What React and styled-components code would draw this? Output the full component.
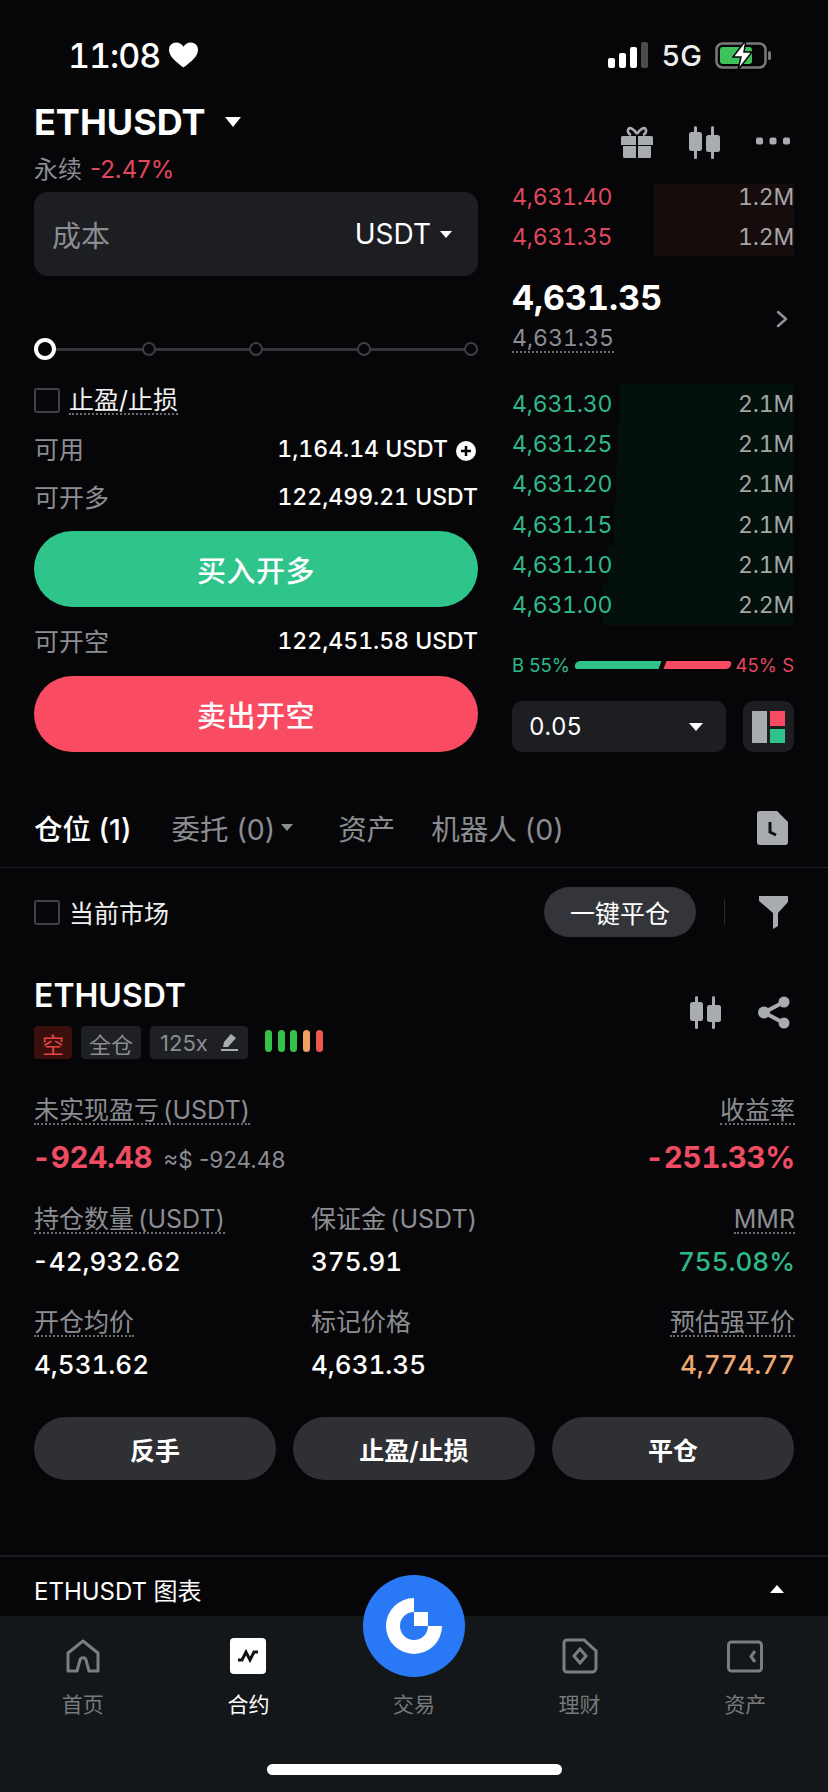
import React from "react";
import styled, { createGlobalStyle } from "styled-components";

const Global = createGlobalStyle`
  html, body { margin: 0; padding: 0; background: #060608; }
  * { box-sizing: border-box; }
`;

const FONT = `Inter, "Noto Sans CJK SC", "Noto Sans", sans-serif`;
const GREY = "#8b8d91";
const RED = "#ee4c62";
const GREEN = "#2fb98a";

const Screen = styled.div`
  position: relative;
  width: 828px;
  height: 1792px;
  overflow: hidden;
  display: flex;
  flex-direction: column;
  background: #060608;
  color: #fff;
  font-family: ${FONT};
  font-variant-numeric: tabular-nums;
`;

const StatusBar = styled.div`
  height: 100px;
  padding: 35px 56px 0 68px;
  display: flex;
  justify-content: space-between;
  align-items: flex-start;
`;
const StatusGroup = styled.div`
  display: flex;
  align-items: center;
  height: 40px;
  gap: ${(p) => p.$gap || 12}px;
`;
const Clock = styled.span`
  font-size: 34px;
  font-weight: 500;
  letter-spacing: -1px;
`;
const Network = styled.span`
  font-size: 29px;
  font-weight: 500;
  color: #eee;
`;

const TradeGrid = styled.section`
  display: grid;
  grid-template-columns: 444px 282px;
  column-gap: 34px;
  padding: 0 34px;
`;
const Column = styled.div`
  display: flex;
  flex-direction: column;
  min-width: 0;
`;
const TitleRow = styled.div`
  height: 44px;
  display: flex;
  align-items: center;
  gap: 19px;
`;
const Title = styled.h1`
  margin: 0;
  font-size: 36px;
  font-weight: 700;
  letter-spacing: 0;
`;
const Caret = styled.span`
  display: block;
  width: 0;
  height: 0;
  border-left: ${(p) => p.$size || 7}px solid transparent;
  border-right: ${(p) => p.$size || 7}px solid transparent;
  ${(p) => (p.$up ? "border-bottom" : "border-top")}: ${(p) => (p.$size || 7) * 1.25}px solid ${(p) => p.$color || "#fff"};
`;
const SubTitle = styled.div`
  margin-top: 11px;
  height: 30px;
  line-height: 30px;
  font-size: 24px;
  color: ${GREY};
  display: flex;
  gap: 8px;
`;
const Down = styled.span`
  color: #e0475f;
  font-variant-numeric: normal;
`;
const InputBox = styled.div`
  margin-top: 7px;
  height: 84px;
  border-radius: 14px;
  background: #1c1e22;
  padding: 0 26px 0 18px;
  display: flex;
  align-items: center;
  justify-content: space-between;
`;
const Placeholder = styled.span`
  font-size: 29px;
  color: #8a8c90;
`;
const UnitPick = styled.span`
  display: flex;
  align-items: center;
  gap: 9px;
  font-size: 28px;
`;

const Slider = styled.div`
  margin-top: 61px;
  height: 24px;
  display: flex;
  align-items: center;
  justify-content: space-between;
  background: linear-gradient(#333539, #333539) center / 100% 3px no-repeat;
`;
const Knob = styled.span`
  width: 22px;
  height: 22px;
  margin-right: -8px;
  border-radius: 50%;
  border: 4px solid #fff;
  background: #060608;
`;
const Stop = styled.span`
  width: 14px;
  height: 14px;
  border-radius: 50%;
  border: 2px solid #3c3e42;
  background: #060608;
`;
const CheckRow = styled.label`
  margin-top: ${(p) => p.$top || 0}px;
  height: 30px;
  display: flex;
  align-items: center;
  gap: 9px;
`;
const Check = styled.span`
  width: 26px;
  height: 25px;
  border-radius: 3px;
  border: 2px solid #3f4145;
`;
const Dotted = styled.span`
  line-height: ${(p) => p.$lh || 26}px;
  display: inline-block;
  border-bottom: 2px dotted ${(p) => p.$color || "#6b6d70"};
`;
const CheckLabel = styled.span`
  font-size: 25px;
  color: #f0f0f0;
`;
const InfoRow = styled.div`
  margin-top: ${(p) => p.$top}px;
  height: 30px;
  display: flex;
  align-items: center;
  justify-content: space-between;
`;
const InfoKey = styled.span`
  margin-top: -2px;
  font-size: 25px;
  color: ${GREY};
`;
const InfoValue = styled.span`
  display: flex;
  align-items: center;
  gap: 8px;
  font-size: 23px;
  font-weight: 500;
`;
const PlusSlot = styled.span`
  display: block;
  height: 20px;
  margin-right: 2px;
`;
const Action = styled.button`
  margin-top: ${(p) => p.$top}px;
  height: 76px;
  border: 0;
  border-radius: 38px;
  background: ${(p) => p.$bg};
  color: #fff;
  font-family: ${FONT};
  font-size: 29px;
  font-weight: 500;
  letter-spacing: 0.5px;
`;

const ToolRow = styled.div`
  height: 77px;
  padding: 26px 4px 0 109px;
  display: flex;
  justify-content: space-between;
  align-items: flex-start;
`;
const Asks = styled.div`
  background: linear-gradient(#170c0c, #170c0c) right 7px / 140px 72px no-repeat;
`;
const BookRow = styled.div`
  height: 40.3px;
  display: flex;
  justify-content: space-between;
  align-items: center;
  font-size: 23px;
  letter-spacing: -0.2px;
`;
const BidRow = styled(BookRow)`
  background: linear-gradient(#03100b, #03100b) right / ${(p) => p.$depth}px 100% no-repeat;
`;
const Price = styled.span`
  color: ${(p) => (p.$up ? GREEN : "#e0475f")};
`;
const Qty = styled.span`
  color: #a3a5a8;
`;
const MidRow = styled.div`
  margin-top: 20px;
  height: 106px;
  display: flex;
  justify-content: space-between;
  align-items: flex-start;
`;
const MidStack = styled.div`
  display: flex;
  flex-direction: column;
  align-items: flex-start;
`;
const MidPrice = styled.span`
  height: 40px;
  line-height: 40px;
  font-size: 34px;
  font-weight: 700;
`;
const MarkPrice = styled.span`
  margin-top: 6px;
  font-size: 23px;
  color: ${GREY};
`;
const Chevron = styled.span`
  margin: 32px 6px 0 0;
  display: block;
`;
const RatioRow = styled.div`
  margin-top: 30px;
  height: 20px;
  display: flex;
  align-items: center;
  justify-content: space-between;
  font-size: 18.5px;
  font-variant-numeric: normal;
`;
const RatioText = styled.span`
  color: ${(p) => p.$color};
  white-space: nowrap;
`;
const RatioBars = styled.div`
  display: flex;
  gap: 5px;
`;
const RatioBar = styled.span`
  display: block;
  height: 8px;
  width: ${(p) => p.$w}px;
  background: ${(p) => p.$color};
  border-radius: ${(p) => (p.$left ? "4px 0 0 4px" : "0 4px 4px 0")};
  transform: skewX(-20deg);
  transform-origin: center;
`;
const SelectRow = styled.div`
  margin-top: 26px;
  height: 51px;
  display: flex;
  justify-content: space-between;
`;
const Select = styled.div`
  width: 214px;
  border-radius: 10px;
  background: #1c1e22;
  padding: 0 23px 0 17px;
  display: flex;
  align-items: center;
  justify-content: space-between;
  font-size: 24px;
`;
const LayoutBtn = styled.div`
  width: 51px;
  border-radius: 10px;
  background: #1c1e22;
  padding: 10px 9px 9px;
  display: grid;
  grid-template-columns: 15px 15px;
  grid-template-rows: 15px 14px;
  gap: 3px;
`;
const Cell = styled.span`
  background: ${(p) => p.$color};
  grid-row: ${(p) => (p.$tall ? "1 / 3" : "auto")};
`;

const Tabs = styled.nav`
  margin-top: 46px;
  height: 70px;
  padding: 0 40px 10px 34px;
  border-bottom: 1px solid #1e2023;
  display: flex;
  align-items: center;
  font-variant-numeric: normal;
`;
const Tab = styled.span`
  margin-right: ${(p) => p.$gap}px;
  display: flex;
  align-items: center;
  gap: 6px;
  font-size: 28.5px;
  font-weight: ${(p) => (p.$on ? 500 : 400)};
  color: ${(p) => (p.$on ? "#fff" : GREY)};
  white-space: nowrap;
`;
const TabEnd = styled.span`
  margin-left: auto;
  display: block;
  height: 34px;
`;
const FilterRow = styled.div`
  margin-top: 19px;
  height: 50px;
  padding: 0 40px 0 34px;
  display: flex;
  align-items: center;
`;
const PillSmall = styled.button`
  margin-left: auto;
  width: 152px;
  height: 50px;
  border: 0;
  border-radius: 25px;
  background: #33353a;
  color: #fff;
  font-family: ${FONT};
  font-size: 25px;
`;
const VLine = styled.span`
  margin: 0 34px 0 28px;
  width: 1px;
  height: 26px;
  background: #26282b;
`;
const PosHead = styled.div`
  margin-top: 39px;
  padding: 0 38px 0 34px;
  display: flex;
  justify-content: space-between;
  align-items: flex-start;
`;
const PosName = styled.h2`
  margin: 0;
  height: 40px;
  line-height: 40px;
  font-size: 32px;
  font-weight: 600;
`;
const TagRow = styled.div`
  margin: 10px 0 0 0;
  height: 33px;
  display: flex;
  align-items: center;
  gap: 9px;
`;
const Tag = styled.span`
  height: 33px;
  padding: 0 ${(p) => p.$pad || 8}px;
  border-radius: 4px;
  background: ${(p) => (p.$danger ? "#3a0f0d" : "#1e2024")};
  color: ${(p) => (p.$danger ? "#e0473c" : GREY)};
  display: flex;
  align-items: center;
  gap: 13px;
  font-size: 22px;
  font-variant-numeric: normal;
`;
const Risk = styled.div`
  margin: -4px 0 0 8px;
  display: flex;
  gap: 5.75px;
`;
const RiskBar = styled.span`
  width: 7px;
  height: 22px;
  border-radius: 4px;
  background: ${(p) => p.$color};
`;
const PosTools = styled.div`
  margin-top: 20px;
  display: flex;
  gap: 36px;
`;
const Metrics = styled.div`
  margin-top: 36px;
  padding: 0 33px 0 34px;
  display: grid;
  grid-template-columns: 277px 1fr auto;
`;
const MetricCell = styled.div`
  height: ${(p) => p.$h}px;
  grid-column: ${(p) => p.$span || "auto"};
  display: flex;
  flex-direction: column;
  align-items: ${(p) => (p.$right ? "flex-end" : "flex-start")};
`;
const MetricKey = styled.span`
  height: 30px;
  font-size: 25px;
  word-spacing: -3px;
  color: ${GREY};
  white-space: nowrap;
`;
const PnlRow = styled.span`
  margin-top: 17px;
  display: flex;
  align-items: baseline;
  gap: 11px;
  line-height: 30px;
`;
const Pnl = styled.span`
  margin-left: -2px;
  font-size: 29.5px;
  font-weight: 700;
  letter-spacing: -0.3px;
  color: ${RED};
`;
const PnlFiat = styled.span`
  font-size: 22.5px;
  color: ${GREY};
  font-variant-numeric: normal;
`;
const MetricValue = styled.span`
  margin-top: 13px;
  margin-left: ${(p) => (p.$negative ? -2 : 0)}px;
  line-height: 30px;
  font-size: 26px;
  font-weight: 500;
  color: ${(p) => p.$color || "#fff"};
`;
const ButtonRow = styled.div`
  margin-top: 20px;
  padding: 0 34px;
  display: grid;
  grid-template-columns: repeat(3, 1fr);
  column-gap: 17px;
`;
const PosButton = styled.button`
  height: 63px;
  border: 0;
  border-radius: 32px;
  background: #2e3034;
  color: #fff;
  font-family: ${FONT};
  font-size: 25px;
  font-weight: 600;
`;
const ChartBar = styled.div`
  margin-top: auto;
  height: 61px;
  padding: 5px 44px 0 34px;
  border-top: 2px solid #1b1c1f;
  display: flex;
  align-items: center;
  justify-content: space-between;
  font-size: 24px;
`;
const BottomNav = styled.footer`
  height: 176px;
  background: #14171a;
  display: flex;
  flex-direction: column;
  align-items: center;
`;
const NavGrid = styled.div`
  width: 100%;
  display: grid;
  grid-template-columns: repeat(5, 1fr);
  padding-top: 22px;
`;
const NavItem = styled.div`
  display: flex;
  flex-direction: column;
  align-items: center;
  gap: 16px;
  font-size: 21px;
  line-height: 30px;
  color: ${(p) => (p.$on ? "#fff" : "#77797c")};
`;
const NavIconSlot = styled.span`
  height: 36px;
  display: block;
`;
const HomeBar = styled.span`
  margin-top: auto;
  margin-bottom: 17px;
  width: 295px;
  height: 11px;
  border-radius: 6px;
  background: #fff;
`;
const Fab = styled.div`
  position: absolute;
  left: 363px;
  top: 1575px;
  width: 102px;
  height: 102px;
  border-radius: 50%;
  background: #2979f7;
  display: flex;
  align-items: center;
  justify-content: center;
`;

const ICON = "#a8abb0";

const Gift = () => (
  <svg width="32" height="32" viewBox="0 0 32 32" fill={ICON}>
    <path d="M0 11.5a1.5 1.5 0 0 1 1.5-1.5H15v9H0zM17 10h13.5a1.5 1.5 0 0 1 1.5 1.5V19H17zM2 20h13v12H3.5A1.5 1.5 0 0 1 2 30.500zM17 20h13v10.500a1.500 1.500 0 0 1-1.500 1.500H17z" />
    <path d="M16 8C13 3 9 1 7.500 3 6 5 7.500 8 10 9M16 8c3-5 7-7 8.500-5 1.500 2 0 5-2.500 6" fill="none" stroke={ICON} strokeWidth="2.600" />
  </svg>
);
const Candles = () => (
  <svg width="33" height="33" viewBox="0 0 33 33" fill={ICON}>
    <rect x="6" y="0" width="3" height="33" rx="1.500" />
    <rect x="1" y="6" width="13" height="19" rx="2.500" />
    <rect x="23" y="0" width="3" height="33" rx="1.500" />
    <rect x="18" y="9" width="14" height="17" rx="2.500" />
  </svg>
);
const Dots = () => (
  <svg width="34" height="32" viewBox="0 0 34 32" fill={ICON}>
    <rect x="0" y="11.500" width="7" height="7" rx="2" />
    <rect x="13.500" y="11.500" width="7" height="7" rx="2" />
    <rect x="27" y="11.500" width="7" height="7" rx="2" />
  </svg>
);
const Heart = () => (
  <svg width="29" height="26" viewBox="0 0 30 26" fill="#fff">
    <path d="M15 26C6 19 0 14 0 7.500 0 3 3.300 0 7.500 0 10.800 0 13.500 1.800 15 4.500 16.500 1.800 19.200 0 22.500 0 26.700 0 30 3 30 7.500 30 14 24 19 15 26z" />
  </svg>
);
const Signal = () => (
  <svg width="41" height="26" viewBox="0 0 41 26">
    <rect x="0" y="16" width="7" height="10" rx="2" fill="#fff" />
    <rect x="11" y="11" width="7" height="15" rx="2" fill="#fff" />
    <rect x="22" y="5" width="7" height="21" rx="2" fill="#fff" />
    <rect x="33" y="0" width="7" height="26" rx="2" fill="#4b4c4e" />
  </svg>
);
const Battery = () => (
  <svg width="57" height="30" viewBox="0 0 57 30">
    <rect x="1.500" y="3.500" width="49" height="24" rx="6" fill="none" stroke="#77797b" strokeWidth="2.500" />
    <rect x="5" y="7" width="32" height="17" rx="3" fill="#3ec25c" />
    <rect x="53" y="11" width="3" height="9" rx="1.500" fill="#77797b" />
    <path d="M31 0 18 17h8l-3 13 14-18h-8z" fill="#fff" stroke="#060608" strokeWidth="1.500" />
  </svg>
);
const ChevronIcon = () => (
  <svg width="12" height="18" viewBox="0 0 12 18" fill="none" stroke="#8f9195" strokeWidth="2.500" strokeLinecap="round" strokeLinejoin="round">
    <path d="M2 2l8 7-8 7" />
  </svg>
);
const PlusCircle = () => (
  <svg width="20" height="20" viewBox="0 0 20 20">
    <circle cx="10" cy="10" r="10" fill="#fff" />
    <path d="M10 5v10M5 10h10" stroke="#060608" strokeWidth="2.500" />
  </svg>
);
const HistoryDoc = () => (
  <svg width="31" height="34" viewBox="0 0 31 34">
    <path d="M3 0h17l11 11v20a3 3 0 0 1-3 3H3a3 3 0 0 1-3-3V3a3 3 0 0 1 3-3z" fill={ICON} />
    <path d="M13 11v10l6 3" fill="none" stroke="#101114" strokeWidth="3" />
  </svg>
);
const Funnel = () => (
  <svg width="29" height="33" viewBox="0 0 29 33" fill={ICON}>
    <path d="M0 0h29v6L19 17v13l-5 3V17L0 5z" />
  </svg>
);
const Share = () => (
  <svg width="32" height="33" viewBox="0 0 32 33" fill={ICON} stroke={ICON}>
    <path d="M26 6 6 16.500 26 27" fill="none" strokeWidth="4" />
    <circle cx="26" cy="6" r="5.500" strokeWidth="0" />
    <circle cx="6" cy="16.500" r="6" strokeWidth="0" />
    <circle cx="26" cy="27" r="5.500" strokeWidth="0" />
  </svg>
);
const Pencil = () => (
  <svg width="17" height="17" viewBox="0 0 17 17" fill={ICON}>
    <path d="M10 0l5 4-8 9H2l1-5zM0 15h17v2H0z" />
  </svg>
);
const HomeIcon = () => (
  <svg width="36" height="36" viewBox="0 0 36 36" fill="none" stroke="#7b7d80" strokeWidth="3" strokeLinejoin="round">
    <path d="M18 3 3 15v18h9l3-11c1-3 5-3 6 0l3 11h9V15z" />
  </svg>
);
const ContractIcon = () => (
  <svg width="36" height="36" viewBox="0 0 36 36">
    <rect width="36" height="36" rx="4" fill="#fff" />
    <path d="M8 22l4 0 4-8 4 8 4-8 4 0" fill="none" stroke="#101114" strokeWidth="3" />
  </svg>
);
const EarnIcon = () => (
  <svg width="36" height="36" viewBox="0 0 36 36" fill="none" stroke="#7b7d80" strokeWidth="3">
    <path d="M5 2h17l12 11v17a4 4 0 0 1-4 4H5a3 3 0 0 1-3-3V5a3 3 0 0 1 3-3z" />
    <path d="M18 11l6 7-6 7-6-7z" strokeWidth="3" />
  </svg>
);
const WalletIcon = () => (
  <svg width="36" height="36" viewBox="0 0 36 36" fill="none" stroke="#7b7d80" strokeWidth="3">
    <rect x="1.500" y="4" width="33" height="29" rx="3" />
    <path d="M28 13l-4 5.500 4 5.500" />
  </svg>
);
const GateLogo = () => (
  <svg width="56" height="56" viewBox="0 0 56 56" fill="#fff">
    <path d="M28 0A28 28 0 1 0 56 28H42A14 14 0 1 1 28 14z" />
    <rect x="28" y="14" width="14" height="14" />
  </svg>
);

const bids = [
  ["4,631.30", "2.1M", 174],
  ["4,631.25", "2.1M", 176],
  ["4,631.20", "2.1M", 178],
  ["4,631.15", "2.1M", 180],
  ["4,631.10", "2.1M", 186],
  ["4,631.00", "2.2M", 191],
];
const riskColors = ["#35c24a", "#35c24a", "#35c24a", "#f0a062", "#ea5a4c"];
const navItems = [
  ["首页", <HomeIcon />],
  ["合约", <ContractIcon />, true],
  ["交易", null],
  ["理财", <EarnIcon />],
  ["资产", <WalletIcon />],
];

export default function App() {
  return (
    <Screen>
      <Global />
      <StatusBar>
        <StatusGroup $gap={9}>
          <Clock>11:08</Clock>
          <Heart />
        </StatusGroup>
        <StatusGroup $gap={13}>
          <Signal />
          <Network>5G</Network>
          <Battery />
        </StatusGroup>
      </StatusBar>

      <TradeGrid>
        <Column>
          <TitleRow>
            <Title>ETHUSDT</Title>
            <Caret $size={8} />
          </TitleRow>
          <SubTitle>
            永续 <Down>-2.47%</Down>
          </SubTitle>
          <InputBox>
            <Placeholder>成本</Placeholder>
            <UnitPick>
              USDT <Caret $size={6} />
            </UnitPick>
          </InputBox>
          <Slider>
            <Knob />
            <Stop />
            <Stop />
            <Stop />
            <Stop />
          </Slider>
          <CheckRow $top={24}>
            <Check />
            <CheckLabel>
              <Dotted>止盈/止损</Dotted>
            </CheckLabel>
          </CheckRow>
          <InfoRow $top={19}>
            <InfoKey>可用</InfoKey>
            <InfoValue>
              1,164.14 USDT
              <PlusSlot>
                <PlusCircle />
              </PlusSlot>
            </InfoValue>
          </InfoRow>
          <InfoRow $top={18}>
            <InfoKey>可开多</InfoKey>
            <InfoValue>122,499.21 USDT</InfoValue>
          </InfoRow>
          <Action $top={19} $bg="#2ec48a">买入开多</Action>
          <InfoRow $top={19}>
            <InfoKey>可开空</InfoKey>
            <InfoValue>122,451.58 USDT</InfoValue>
          </InfoRow>
          <Action $top={20} $bg="#f94c62">卖出开空</Action>
        </Column>

        <Column>
          <ToolRow>
            <Gift />
            <Candles />
            <Dots />
          </ToolRow>
          <Asks>
            <BookRow>
              <Price>4,631.40</Price>
              <Qty>1.2M</Qty>
            </BookRow>
            <BookRow>
              <Price>4,631.35</Price>
              <Qty>1.2M</Qty>
            </BookRow>
          </Asks>
          <MidRow>
            <MidStack>
              <MidPrice>4,631.35</MidPrice>
              <MarkPrice>
                <Dotted>4,631.35</Dotted>
              </MarkPrice>
            </MidStack>
            <Chevron>
              <ChevronIcon />
            </Chevron>
          </MidRow>
          <div>
            {bids.map(([price, qty, depth]) => (
              <BidRow key={price} $depth={depth}>
                <Price $up>{price}</Price>
                <Qty>{qty}</Qty>
              </BidRow>
            ))}
          </div>
          <RatioRow>
            <RatioText $color={GREEN}>B 55%</RatioText>
            <RatioBars>
              <RatioBar $left $w={85} $color="#2ec48a" />
              <RatioBar $w={66} $color="#f94c62" />
            </RatioBars>
            <RatioText $color="#e0475f">45% S</RatioText>
          </RatioRow>
          <SelectRow>
            <Select>
              0.05 <Caret $size={7} />
            </Select>
            <LayoutBtn>
              <Cell $tall $color="#a8abb0" />
              <Cell $color="#f94c62" />
              <Cell $color="#2ec48a" />
            </LayoutBtn>
          </SelectRow>
        </Column>
      </TradeGrid>

      <Tabs>
        <Tab $on $gap={40}>仓位 (1)</Tab>
        <Tab $gap={45}>
          委托 (0) <Caret $size={6} $color={GREY} />
        </Tab>
        <Tab $gap={36}>资产</Tab>
        <Tab $gap={0}>机器人 (0)</Tab>
        <TabEnd>
          <HistoryDoc />
        </TabEnd>
      </Tabs>

      <FilterRow>
        <CheckRow>
          <Check />
          <CheckLabel>当前市场</CheckLabel>
        </CheckRow>
        <PillSmall>一键平仓</PillSmall>
        <VLine />
        <Funnel />
      </FilterRow>

      <PosHead>
        <div>
          <PosName>ETHUSDT</PosName>
          <TagRow>
            <Tag $danger>空</Tag>
            <Tag>全仓</Tag>
            <Tag $pad={10}>
              125x <Pencil />
            </Tag>
            <Risk>
              {riskColors.map((c, i) => (
                <RiskBar key={i} $color={c} />
              ))}
            </Risk>
          </TagRow>
        </div>
        <PosTools>
          <Candles />
          <Share />
        </PosTools>
      </PosHead>

      <Metrics>
        <MetricCell $h={109} $span="1 / 3">
          <MetricKey>
            <Dotted>未实现盈亏 (USDT)</Dotted>
          </MetricKey>
          <PnlRow>
            <Pnl>-924.48</Pnl>
            <PnlFiat>≈$ -924.48</PnlFiat>
          </PnlRow>
        </MetricCell>
        <MetricCell $h={109} $right>
          <MetricKey>
            <Dotted>收益率</Dotted>
          </MetricKey>
          <PnlRow>
            <Pnl>-251.33%</Pnl>
          </PnlRow>
        </MetricCell>

        <MetricCell $h={103}>
          <MetricKey>
            <Dotted>持仓数量 (USDT)</Dotted>
          </MetricKey>
          <MetricValue $negative>-42,932.62</MetricValue>
        </MetricCell>
        <MetricCell $h={103}>
          <MetricKey>
            <Dotted $color="transparent">保证金 (USDT)</Dotted>
          </MetricKey>
          <MetricValue>375.91</MetricValue>
        </MetricCell>
        <MetricCell $h={103} $right>
          <MetricKey>
            <Dotted>MMR</Dotted>
          </MetricKey>
          <MetricValue $color={GREEN}>755.08%</MetricValue>
        </MetricCell>

        <MetricCell $h={90}>
          <MetricKey>
            <Dotted>开仓均价</Dotted>
          </MetricKey>
          <MetricValue>4,531.62</MetricValue>
        </MetricCell>
        <MetricCell $h={90}>
          <MetricKey>
            <Dotted $color="transparent">标记价格</Dotted>
          </MetricKey>
          <MetricValue>4,631.35</MetricValue>
        </MetricCell>
        <MetricCell $h={90} $right>
          <MetricKey>
            <Dotted>预估强平价</Dotted>
          </MetricKey>
          <MetricValue $color="#f0a872">4,774.77</MetricValue>
        </MetricCell>
      </Metrics>

      <ButtonRow>
        <PosButton>反手</PosButton>
        <PosButton>止盈/止损</PosButton>
        <PosButton>平仓</PosButton>
      </ButtonRow>

      <ChartBar>
        <span>ETHUSDT 图表</span>
        <Caret $up $size={7} />
      </ChartBar>

      <BottomNav>
        <NavGrid>
          {navItems.map(([label, icon, on]) => (
            <NavItem key={label} $on={on}>
              <NavIconSlot>{icon}</NavIconSlot>
              {label}
            </NavItem>
          ))}
        </NavGrid>
        <HomeBar />
      </BottomNav>

      <Fab>
        <GateLogo />
      </Fab>
    </Screen>
  );
}
